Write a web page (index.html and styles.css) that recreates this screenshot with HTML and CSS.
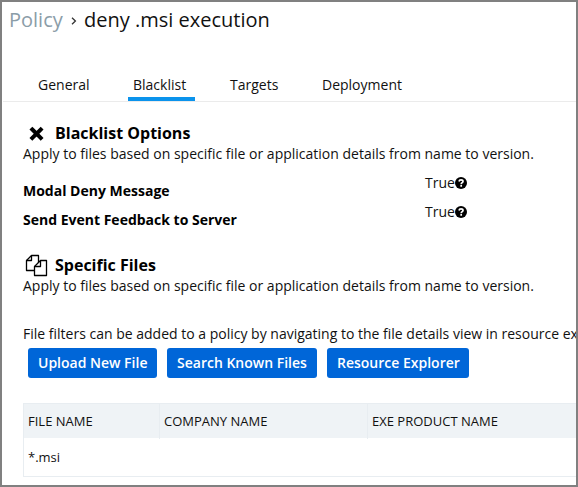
FILE: index.html
```html
<!DOCTYPE html>
<html lang="en">
<head>
<meta charset="utf-8">
<title>Policy</title>
<link rel="stylesheet" href="styles.css">
</head>
<body>
<main class="frame">
  <header class="crumbs"><span class="parent">Policy</span><svg class="chevron" viewBox="0 0 6 8"><path d="M1 .8 4.4 4 1 7.2"/></svg><span class="current">deny .msi execution</span></header>
  <nav class="tabs">
    <a class="tab general"><span>General</span></a>
    <a class="tab active"><span>Blacklist</span></a>
    <a class="tab targets"><span>Targets</span></a>
    <a class="tab deployment"><span>Deployment</span></a>
  </nav>
  <section class="options">
    <h2><svg class="icon" viewBox="0 0 26 24"><path d="M9.300 8.500 17.700 16.900M17.700 8.500 9.300 16.900" fill="none" stroke="#000" stroke-width="4" stroke-linecap="square"/></svg><span>Blacklist Options</span></h2>
    <p>Apply to files based on specific file or application details from name to version.</p>
    <dl>
      <div class="option"><dt>Modal Deny Message</dt><dd><span>True</span><svg class="help" viewBox="0 0 12 12"><circle cx="6" cy="6" r="6"/><path d="M4 4.500C4.200 3.300 5 2.900 6 2.900c1.300 0 2 .6 2 1.500C8 5.600 6.200 5.700 6.200 7.200M6.200 8.100V9.700"/></svg></dd></div>
      <div class="option"><dt>Send Event Feedback to Server</dt><dd><span>True</span><svg class="help" viewBox="0 0 12 12"><circle cx="6" cy="6" r="6"/><path d="M4 4.500C4.200 3.300 5 2.900 6 2.900c1.300 0 2 .6 2 1.500C8 5.600 6.200 5.700 6.200 7.200M6.200 8.100V9.700"/></svg></dd></div>
    </dl>
  </section>
  <section class="files">
    <h2><svg class="icon" viewBox="0 0 26 24"><g fill="#fff" stroke="#000" stroke-width="1.300" stroke-linejoin="round"><path d="M15.500 17.500H3.500V7.500L8.500 2.500H15.500Z"/><path d="M8.500 2.500V7.500H3.500" fill="none"/><path d="M11.500 22.500V13.500L17.500 7.500H23.500V22.500Z"/><path d="M17.500 7.500V13.500H11.500" fill="none"/></g></svg><span>Specific Files</span></h2>
    <p>Apply to files based on specific file or application details from name to version.</p>
    <p class="note">File filters can be added to a policy by navigating to the file details view in resource ex</p>
    <div class="actions">
      <button class="upload">Upload New File</button>
      <button class="search">Search Known Files</button>
      <button class="explore">Resource Explorer</button>
    </div>
    <div class="grid">
      <div class="row head"><span>FILE NAME</span><span>COMPANY NAME</span><span>EXE PRODUCT NAME</span></div>
      <div class="row"><span>*.msi</span><span></span><span></span></div>
    </div>
  </section>
</main>
</body>
</html>
```
FILE: styles.css
```css
* { box-sizing: border-box; }
body { margin: 0; background: #fff; color: #111; font: 14px/20px "Open Sans", sans-serif; }
h2, p, dl, dd { margin: 0; }
.frame { width: 578px; height: 487px; border: 2px solid #808080; overflow: hidden; }
.crumbs { display: flex; height: 34px; padding-left: 7px; font-size: 20px; line-height: 36px; white-space: nowrap; }
.parent { width: 54px; color: #8b9da8; }
.chevron { width: 6px; height: 8px; margin: 15px 7px 0 8px; fill: none; stroke: #333; stroke-width: 1.3; }
.tabs { display: flex; height: 66px; align-items: flex-end; margin-left: 1px; border-bottom: 1px solid #ebebeb; }
.tab { height: 30px; line-height: 27px; padding-left: 5px; white-space: nowrap; }
.general { width: 67px; margin: 0 28px 0 30px; }
.active { width: 67px; border-bottom: 4px solid #0b93ec; }
.targets { margin-left: 30px; width: 67px; }
.deployment { margin-left: 25px; }
.options, .files { padding-left: 21px; }
.options { padding-top: 19px; height: 131px; }
h2 { display: flex; height: 24px; font-size: 16px; line-height: 24px; font-weight: 700; color: #000; }
.icon { width: 26px; height: 24px; margin-right: 6px; }
p { height: 20px; line-height: 17px; white-space: nowrap; }
dl { padding-top: 8px; }
.option { display: flex; height: 29px; }
dt { width: 402px; padding-top: 8px; font-weight: 700; color: #000; }
dd { display: flex; }
dd span { width: 30px; }
.help { width: 12px; height: 12px; margin-top: 4px; }
.help path { fill: none; stroke: #fff; stroke-width: 1.7; }
.files { padding-top: 20px; }
.note { margin-top: 28px; }
.actions { display: flex; gap: 10px; margin: 3px 0 25px 5px; }
button { height: 30px; border: 0; border-radius: 3px; padding: 0 0 0 10px; background: #0066d8; color: #fff; font: 600 14px/30px "Open Sans", sans-serif; text-align: left; white-space: nowrap; }
.upload { width: 129px; }
.search { width: 150px; }
.explore { width: 142px; }
.grid { width: 620px; height: 74px; border: 1px solid #e8edf1; }
.row { display: grid; grid-template-columns: 135px 208px 1fr; height: 37px; line-height: 38px; font-size: 13px; }
.row span { padding-left: 4px; }
.head { height: 34px; line-height: 35px; background: #eff3f6; }
.head span + span { border-left: 1px solid #e8edf1; }
```
